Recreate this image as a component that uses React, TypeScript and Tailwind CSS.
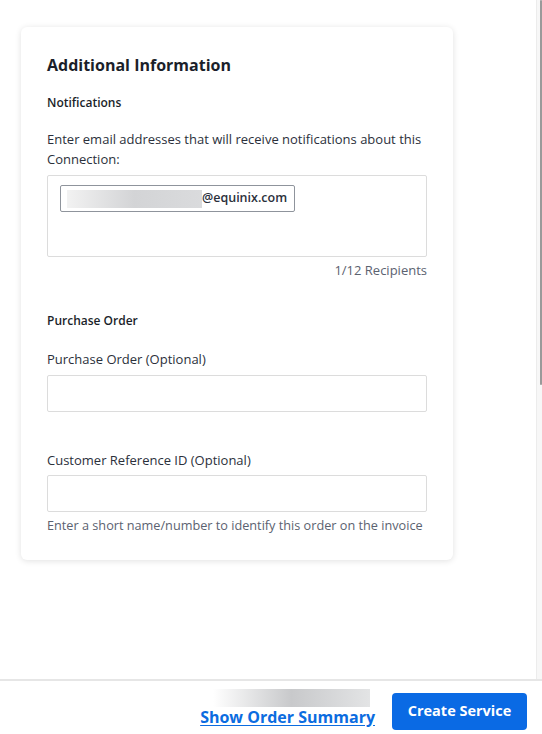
import React from 'react'

const font = { fontFamily: '"Open Sans", Lato, sans-serif' }

function Label({ children }: { children: React.ReactNode }) {
  return <div className="text-[13px] leading-4 text-[#2b303b]">{children}</div>
}

function TextInput() {
  return <div className="h-[37px] w-full rounded-[2px] border border-[#dcdcdc] bg-white" />
}

function Scrollbar() {
  return (
    <div className="flex h-full w-[6px] justify-end border-l border-[#ececec] bg-[#f7f7f7]">
      <div className="h-[385px] w-[2px] rounded-full bg-[#9a9a9a]" />
    </div>
  )
}

export default function App() {
  return (
    <div className="flex h-[734px] w-[542px] flex-col bg-white" style={font}>
      <div className="flex min-h-0 flex-1">
        <div className="flex-1 pt-[27px] pl-[21px]">
          <section className="w-[432px] rounded-md bg-white px-[26px] pt-[28px] pb-[27px] shadow-[0_1px_6px_rgba(0,0,0,0.12)]">
            <h1 className="text-[16px] leading-5 font-bold text-[#1b1f2a]">Additional Information</h1>

            <h2 className="mt-5 text-[12px] leading-4 font-semibold text-[#1b1f2a]">Notifications</h2>
            <p className="mt-[18px] text-[13px] leading-5 text-[#2b303b]">
              Enter email addresses that will receive notifications about this Connection:
            </p>
            <div className="mt-[6px] h-[82px] rounded-[2px] border border-[#dcdcdc] px-[12px] pt-[9px]">
              <div className="flex h-[27px] w-[235px] items-center rounded-[2px] border border-[#8f949c] pl-[6px]">
                <div className="h-[18px] w-[135px] bg-gradient-to-r from-[#f2f2f2] via-[#d3d4d6] to-[#dadbdd]" />
                <span className="text-[12.5px] font-semibold text-[#2b303b]">@equinix.com</span>
              </div>
            </div>
            <div className="mt-[5px] text-right text-[13px] leading-4 text-[#5b6270]">1/12 Recipients</div>

            <h2 className="mt-[35px] text-[12px] leading-4 font-semibold text-[#1b1f2a]">Purchase Order</h2>
            <div className="mt-[22px]">
              <Label>Purchase Order (Optional)</Label>
            </div>
            <div className="mt-2">
              <TextInput />
            </div>
            <div className="mt-10">
              <Label>Customer Reference ID (Optional)</Label>
            </div>
            <div className="mt-[7px]">
              <TextInput />
            </div>
            <div className="mt-[5px] whitespace-nowrap text-[12.7px] leading-4 text-[#5b6270]">
              Enter a short name/number to identify this order on the invoice
            </div>
          </section>
        </div>
        <Scrollbar />
      </div>

      <footer className="flex h-[55px] items-center justify-end gap-[17px] border-t-2 border-[#e6e6e6] pr-[15px]">
        <div className="flex flex-col items-end">
          <div className="mr-[5px] h-[18px] w-[157px] bg-gradient-to-r from-[#ffffff] via-[#c8c9cb] to-[#e3e4e5]" />
          <a href="#" className="text-[16px] leading-[20px] font-bold text-[#0b6ce0] underline underline-offset-2">
            Show Order Summary
          </a>
        </div>
        <button className="mt-[7px] h-[37px] w-[135px] rounded-[4px] bg-[#0a6ae4] text-[14.5px] font-bold text-white">
          Create Service
        </button>
      </footer>
    </div>
  )
}
